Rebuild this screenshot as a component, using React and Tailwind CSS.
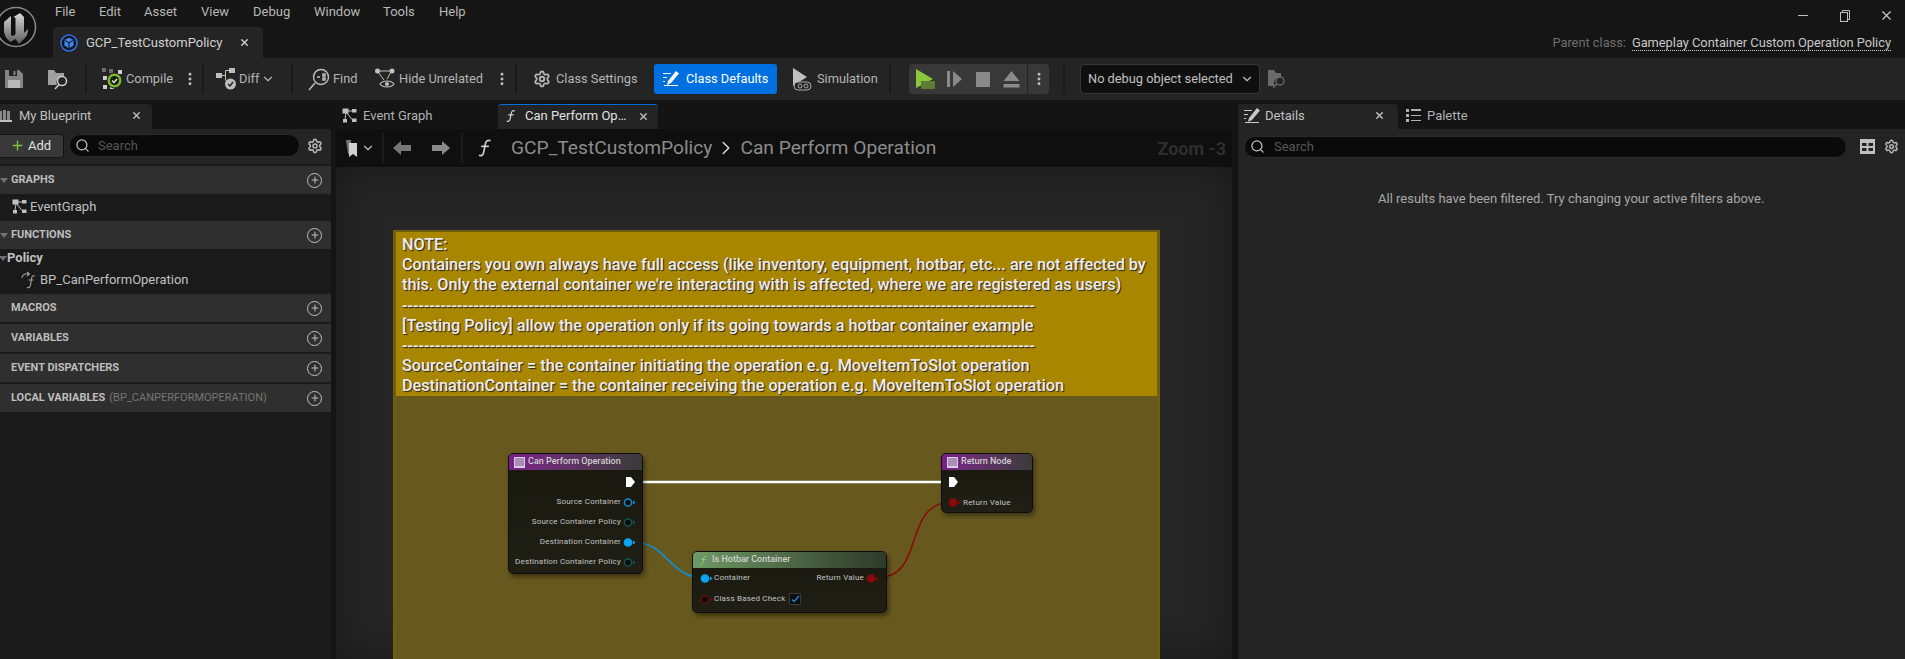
import { ChevronDown, ChevronRight, MoreVertical, Plus, Search, Settings, X } from 'lucide-react';

const menuItems = [
    ['File', 'w-[44px]'],
    ['Edit', 'w-[45px]'],
    ['Asset', 'w-[57px]'],
    ['View', 'w-[52px]'],
    ['Debug', 'w-[61px]'],
    ['Window', 'w-[69px]'],
    ['Tools', 'w-[56px]'],
    ['Help', 'w-[40px]'],
];

function UnrealLogo() {
    return (
        <svg width="44" height="44" viewBox="0 0 44 44" className="shrink-0">
            <defs>
                <linearGradient id="ue-mark" x1="0" y1="0" x2="0" y2="1">
                    <stop offset="0" stopColor="#d8d8d8" />
                    <stop offset="1" stopColor="#5c5c5c" />
                </linearGradient>
            </defs>
            <circle cx="22" cy="22" r="19.500" fill="#101010" stroke="#8a8a8a" strokeWidth="1.500" />
            <path d="M10 17l7-6v18c0 2 2 2.500 3.500 1l1-1V13l-2-1 6.500-4 4 4v16l4-4c0 4-1 7-4 10l-5 5-3.500-5-5 3c-4-3-6.500-7-6.500-12z" fill="url(#ue-mark)" />
        </svg>
    );
}

function BlueprintBadge() {
    return (
        <svg width="18" height="18" viewBox="0 0 18 18">
            <circle cx="9" cy="9" r="8" fill="#111" stroke="#2f6fe0" strokeWidth="1.6" />
            <path d="M9 3.5l4.6 2.6v5.4L9 14.5l-4.6-3V6.1z" fill="#3f84f0" />
            <path d="M4.6 6.2L9 8.8l4.4-2.6M9 8.8v5.5" stroke="#111" strokeWidth="1" fill="none" />
        </svg>
    );
}

function GraphIcon({ className = 'text-[#c0c0c0]' }) {
    return (
        <svg width="15" height="15" viewBox="0 0 15 15" className={className} fill="currentColor">
            <rect x="0.5" y="0.5" width="6" height="5" />
            <rect x="10" y="1" width="4.5" height="3.5" />
            <rect x="1" y="11" width="4" height="3.5" />
            <rect x="10" y="10.5" width="4.5" height="3.5" />
            <path d="M6 3h4M4 5l-1 6M5 5l5 6.5" stroke="currentColor" strokeWidth="1" fill="none" />
        </svg>
    );
}

function FunctionGlyph({ size = 18, color = '#c8c8c8' }) {
    return (
        <svg width={size} height={size} viewBox="0 0 18 18" fill="none" stroke={color} strokeWidth="1.5">
            <path d="M14 2.5c-2.5-1-4 0-4.6 2.5L7.8 13c-.5 2.5-2 3.5-4.3 2.6" />
            <path d="M5.5 7.5h7" />
        </svg>
    );
}

function DetailsIcon({ color = '#c8c8c8' }) {
    return (
        <svg width="18" height="18" viewBox="0 0 18 18" fill="none">
            <path d="M1 3.5h8M1 7.5h4M2 15.5h14M1 11.5h2" stroke={color} strokeWidth="1" />
            <path d="M14 1l3 2.5-8 9.5-4 2 1-4z" fill={color} />
        </svg>
    );
}

function GearIcon({ size = 18 }) {
    return <Settings size={size} strokeWidth={2.4} className="text-[#b5b5b5]" />;
}

function Sep() {
    return <div className="h-[30px] w-[2px] shrink-0 bg-[#1a1a1a]" />;
}

function Dots() {
    return <MoreVertical size={16} strokeWidth={2.4} className="shrink-0 text-[#c0c0c0]" />;
}

function Toolbar() {
    return (
        <div className="flex h-[42px] shrink-0 items-center bg-[#242424] text-[12.800px] text-[#b4b4b4]">
            <div className="flex w-[85px] shrink-0 items-center pl-[5px]">
                <svg width="18" height="18" viewBox="0 0 18 18" fill="#858585">
                    <path d="M0 0h14l4 4v14H0z" />
                    <rect x="4" y="0" width="8" height="6" fill="#242424" />
                    <rect x="8.500" y="1" width="2" height="4" fill="#858585" />
                    <rect x="3" y="10" width="12" height="8" fill="#b8b8b8" />
                </svg>
                <svg width="21" height="21" viewBox="0 0 21 21" className="ml-[25px]" fill="none">
                    <path d="M0 1h6l2 3h8v3a6.500 6.500 0 0 0-7 9H0z" fill="#a0a0a0" />
                    <circle cx="14" cy="12" r="4.500" stroke="#d0d0d0" strokeWidth="1.500" />
                    <path d="M11 15.500l-4 4.500" stroke="#d0d0d0" strokeWidth="1.500" />
                </svg>
            </div>
            <Sep />
            <div className="flex w-[115px] shrink-0 items-center pl-[15px]">
                <svg width="21" height="22" viewBox="0 0 21 22" className="shrink-0">
                    <path d="M0 0h4v4H0zM7 1h4v4H7z" fill="#6e6e6e" />
                    <path d="M16 2h4v4h-4zM1 8h4v4H1zM1 17h4v4H1zM8 18h4v3H8z" fill="#d0d0d0" />
                    <circle cx="12.500" cy="12.500" r="7.500" fill="#7cb82f" stroke="#1c1c1c" strokeWidth="1" />
                    <circle cx="12.500" cy="12.500" r="4.500" fill="#17210d" />
                    <path d="M10 12.500l2 2 3-3.500" stroke="#e8e8e8" strokeWidth="1.500" fill="none" />
                </svg>
                <span className="ml-[3px]">Compile</span>
                <span className="ml-[9px] flex"><Dots /></span>
            </div>
            <Sep />
            <div className="flex w-[87px] shrink-0 items-center pl-[12px]">
                <svg width="20" height="24" viewBox="0 0 20 24" className="shrink-0" fill="#bdbdbd">
                    <rect x="0" y="6" width="6" height="5" />
                    <rect x="13" y="1" width="6" height="5" />
                    <path d="M6 8.5h3.5V3.5H13M9.5 8.5v5" stroke="#bdbdbd" fill="none" />
                    <circle cx="14.5" cy="17" r="5.5" />
                    <path d="M12 17l2 2 3-4" stroke="#242424" strokeWidth="1.4" fill="none" />
                </svg>
                <span className="ml-[3px]">Diff</span>
                <ChevronDown size={14} className="ml-[2px]" />
            </div>
            <Sep />
            <div className="flex w-[222px] shrink-0 items-center pl-[15px]">
                <svg width="22" height="24" viewBox="0 0 22 24" className="shrink-0" fill="none" stroke="#c0c0c0" strokeWidth="1.4">
                    <circle cx="13" cy="10" r="7.5" />
                    <path d="M7 16l-6 7" />
                    <path d="M9 10h3M15 7h2v2h-2zM15 11h2v2h-2z" />
                </svg>
                <span className="ml-[3px] w-[28px]">Find</span>
                <svg width="20" height="22" viewBox="0 0 20 22" className="ml-[14px] shrink-0" fill="none">
                    <circle cx="2.5" cy="3" r="2.5" fill="#c0c0c0" />
                    <circle cx="17" cy="3" r="2.5" fill="#c0c0c0" />
                    <path d="M3 3h13M3 4l6 8M16 4l-4 7" stroke="#c0c0c0" />
                    <path d="M5 16c3-4 11-4 14 0-3 4-11 4-14 0z" stroke="#c0c0c0" strokeWidth="1.2" />
                    <circle cx="12" cy="16" r="2" fill="#c0c0c0" />
                </svg>
                <span className="ml-[4px] w-[95px] whitespace-nowrap">Hide Unrelated</span>
                <Dots />
            </div>
            <Sep />
            <div className="flex w-[372px] shrink-0 items-center pl-[16px]">
                <GearIcon size={18} />
                <span className="ml-[5px] w-[98px] whitespace-nowrap">Class Settings</span>
                <div className="flex h-[30px] w-[123px] shrink-0 items-center rounded-[3px] bg-[#0070e0] pl-[8px] text-white">
                    <DetailsIcon color="#ffffff" />
                    <span className="ml-[6px] whitespace-nowrap">Class Defaults</span>
                </div>
                <svg width="20" height="24" viewBox="0 0 20 24" className="ml-[15px] shrink-0">
                    <path d="M1 1l14 9-14 9z" fill="#c0c0c0" />
                    <rect x="2" y="15" width="17" height="8" rx="4" fill="#242424" stroke="#a8a8a8" />
                    <circle cx="8" cy="19" r="2" fill="none" stroke="#a8a8a8" />
                    <circle cx="14" cy="19" r="2" fill="none" stroke="#a8a8a8" />
                </svg>
                <span className="ml-[5px] whitespace-nowrap">Simulation</span>
            </div>
            <Sep />
            <div className="flex w-[172px] shrink-0 items-center pl-[18px]">
                <div className="flex h-[30px] w-[118px] shrink-0 items-center rounded-l-[4px] bg-[#383838]">
                    <svg width="20" height="20" viewBox="0 0 20 20" className="ml-[7px] shrink-0">
                        <path d="M0 0l17 10L0 19z" fill="#8cc63f" />
                        <rect x="5" y="12" width="14" height="8" fill="#5b7e33" />
                    </svg>
                    <svg width="16" height="16" viewBox="0 0 16 16" className="ml-[11px] shrink-0" fill="#8a8a8a">
                        <rect x="0" y="0" width="3" height="16" />
                        <path d="M6 0l9 8-9 8z" />
                    </svg>
                    <div className="ml-[13px] h-[15px] w-[14px] shrink-0 bg-[#8a8a8a]" />
                    <svg width="17" height="17" viewBox="0 0 17 17" className="ml-[13px] shrink-0" fill="#8a8a8a">
                        <path d="M8.5 0l8 10H.5z" />
                        <rect x="0.5" y="13" width="16" height="3.5" />
                    </svg>
                </div>
                <div className="ml-[1px] flex h-[30px] w-[21px] shrink-0 items-center justify-center rounded-r-[4px] bg-[#383838]">
                    <Dots />
                </div>
            </div>
            <Sep />
            <div className="flex grow items-center pl-[15px]">
                <div className="flex h-[30px] w-[180px] shrink-0 items-center justify-between rounded-[4px] border border-[#383838] bg-[#0f0f0f] pl-[7px] pr-[5px] text-[#c0c0c0]">
                    <span className="whitespace-nowrap">No debug object selected</span>
                    <ChevronDown size={14} />
                </div>
                <svg width="20" height="20" viewBox="0 0 20 20" className="ml-[7px] shrink-0" fill="none">
                    <path d="M1 1h6l2 3h5v4a6 6 0 0 0-6 9H1z" fill="#6a6a6a" />
                    <circle cx="13" cy="12" r="4" stroke="#6a6a6a" strokeWidth="1.3" />
                    <path d="M10 15l-4 4" stroke="#6a6a6a" strokeWidth="1.3" />
                </svg>
            </div>
        </div>
    );
}

function SectionRow({ label, suffix, open }) {
    return (
        <div className="flex h-[28px] shrink-0 items-center bg-[#2f2f2f] pr-[9px]">
            <div className="w-[11px] shrink-0">
                {open ? <div className="h-0 w-0 border-x-[4px] border-t-[5px] border-x-transparent border-t-[#707070]" /> : null}
            </div>
            <span className="text-[11px] font-bold uppercase whitespace-nowrap text-[#bdbdbd]">
                {label}
                {suffix ? <span className="ml-[4px] font-normal text-[#757575]">{suffix}</span> : null}
            </span>
            <div className="ml-auto flex h-[15px] w-[15px] items-center justify-center rounded-full border-[1.5px] border-[#c0c0c0] text-[#c0c0c0]">
                <Plus size={10} strokeWidth={2.5} />
            </div>
        </div>
    );
}

function MyBlueprint() {
    return (
        <div className="flex w-[331px] shrink-0 flex-col">
            <div className="flex h-[29px] shrink-0 items-end bg-[#141414]">
                <div className="flex h-[25px] w-[152px] items-center rounded-tr-[4px] bg-[#242424] pb-[2px] text-[13px] text-[#c0c0c0]">
                    <svg width="14" height="14" viewBox="0 0 14 14" className="-ml-[2px] shrink-0" fill="#8a8a8a">
                        <path d="M1 2h3v9H1zM5 1h3v10H5zM9 2h3v9H9z" />
                        <rect x="0" y="11" width="14" height="2" fill="#c0c0c0" />
                    </svg>
                    <span className="ml-[7px] w-[112px]">My Blueprint</span>
                    <X size={11} strokeWidth={3} />
                </div>
            </div>
            <div className="flex h-[35px] shrink-0 items-center bg-[#242424] pb-[2px]">
                <div className="flex h-[24px] w-[64px] shrink-0 items-center rounded-r-[3px] border border-l-0 border-[#141414] bg-[#383838] text-[13px] text-[#e0e0e0]">
                    <Plus size={15} strokeWidth={2.2} className="ml-[10px] text-[#7cc23f]" />
                    <span className="ml-[3px]">Add</span>
                </div>
                <div className="ml-[5px] flex h-[23px] w-[231px] shrink-0 items-center rounded-full border border-[#2a2a2a] bg-[#0a0a0a] text-[13px] text-[#555]">
                    <Search size={15} className="ml-[5px] text-[#c0c0c0]" />
                    <span className="ml-[8px]">Search</span>
                </div>
                <span className="ml-[7px] flex"><GearIcon size={16} /></span>
            </div>
            <div className="h-[2px] shrink-0 bg-[#1a1a1a]" />
            <SectionRow label="Graphs" open />
            <div className="flex h-[27px] shrink-0 items-center bg-[#1a1a1a] pb-[2px] pl-[12px] text-[13px] text-[#c0c0c0]">
                <GraphIcon />
                <span className="ml-[3px]">EventGraph</span>
            </div>
            <SectionRow label="Functions" open />
            <div className="h-[45px] shrink-0 bg-[#1a1a1a]">
                <div className="-ml-[1px] flex h-[18px] items-center">
                    <div className="h-0 w-0 border-x-[4px] border-t-[5px] border-x-transparent border-t-[#707070]" />
                    <span className="text-[13px] font-bold text-[#c0c0c0]">Policy</span>
                </div>
                <div className="flex h-[25px] items-center pl-[21px] text-[13px] text-[#c0c0c0]">
                    <svg width="16" height="18" viewBox="0 0 16 18" fill="none" stroke="#a0a0a0" strokeWidth="1.1">
                        <path d="M1 7c0-3 3-5 7-4M6 1l2.5 2L6 5" />
                        <path d="M14 5c-2-.6-3 0-3.3 2L9.500 14c-.3 2-1.500 3-3.500 2.500M7.500 9h5" />
                    </svg>
                    <span className="ml-[3px]">BP_CanPerformOperation</span>
                </div>
            </div>
            <SectionRow label="Macros" />
            <div className="h-[2px] shrink-0 bg-[#1a1a1a]" />
            <SectionRow label="Variables" />
            <div className="h-[2px] shrink-0 bg-[#1a1a1a]" />
            <SectionRow label="Event Dispatchers" />
            <div className="h-[2px] shrink-0 bg-[#1a1a1a]" />
            <SectionRow label="Local Variables" suffix="(BP_CANPERFORMOPERATION)" />
            <div className="grow bg-[#1a1a1a]" />
        </div>
    );
}

function Pin({ color, filled }) {
    return (
        <svg width="15" height="11" viewBox="0 0 15 11" className="shrink-0">
            <circle cx="6" cy="5.500" r="3.600" fill={filled ? color : '#0b0b08'} stroke={color} strokeWidth="1.500" />
            <path d="M11 3.500l2.500 2-2.500 2z" fill={color} />
        </svg>
    );
}

function ExecPin() {
    return (
        <svg width="11" height="12" viewBox="0 0 11 12" className="shrink-0">
            <path d="M1 1h5l4 5-4 5H1z" fill="#ffffff" />
        </svg>
    );
}

function NodeHeader({ title, gradient, func }) {
    return (
        <div className={`flex h-[16px] items-center rounded-t-[4px] pl-[5px] ${gradient}`}>
            {func ? (
                <FunctionGlyph size={11} color="#8fd080" />
            ) : (
                <div className="flex h-[11px] w-[11px] shrink-0 items-end border border-[#d8cde0] bg-[#a98fb5]">
                    <div className="h-[1px] w-full bg-[#d8cde0]" />
                </div>
            )}
            <span className="ml-[3px] text-[9px] font-medium whitespace-nowrap text-[#d0d0d0]">{title}</span>
        </div>
    );
}

function OutRow({ label, color, filled }) {
    return (
        <div className="flex h-[20px] items-center justify-end pr-[5px]">
            <span className="mr-[1px] text-[8px] tracking-[0.2px] whitespace-nowrap text-[#c4c4c4]">{label}</span>
            <Pin color={color} filled={filled} />
        </div>
    );
}

function Node({ className, children }) {
    return (
        <div className={`absolute rounded-[5px] border border-[#0d0d0d] bg-gradient-to-b from-[#18180f] to-[#1f1f15] shadow-[2px_3px_4px_rgba(0,0,0,0.4)] ${className}`}>
            {children}
        </div>
    );
}

function CanvasNodes() {
    return (
        <div className="relative h-[300px] bg-[#67581e]">
            <svg width="760" height="300" className="absolute inset-0" fill="none">
                <path d="M240 86H552" stroke="#ffffff" strokeWidth="2.500" />
                <path d="M237 146C272 146 272 182 309 182" stroke="#0a93d8" strokeWidth="1.500" />
                <path d="M480 182C532 182 504 106 557 106" stroke="#8a0a0a" strokeWidth="1.500" />
            </svg>
            <Node className="left-[112px] top-[57px] h-[121px] w-[135px]">
                <NodeHeader title="Can Perform Operation" gradient="bg-gradient-to-r from-[#7d1d8a] to-[#3a3a3a]" />
                <div className="flex h-[24px] items-center justify-end pr-[6px]"><ExecPin /></div>
                <div className="-mt-[2px]">
                    <OutRow label="Source Container" color="#0a8fd8" />
                    <OutRow label="Source Container Policy" color="#0b5a55" />
                    <OutRow label="Destination Container" color="#0aa5f5" filled />
                    <OutRow label="Destination Container Policy" color="#0b5a55" />
                </div>
            </Node>
            <Node className="left-[296px] top-[155px] h-[62px] w-[195px]">
                <NodeHeader title="Is Hotbar Container" func gradient="bg-gradient-to-r from-[#6f9a66] to-[#2e3a2a]" />
                <div className="flex h-[20px] items-center pl-[6px] pr-[6px]">
                    <Pin color="#0aa5f5" filled />
                    <span className="text-[8px] tracking-[0.2px] text-[#c4c4c4]">Container</span>
                    <span className="ml-auto mr-[1px] text-[8px] tracking-[0.2px] text-[#c4c4c4]">Return Value</span>
                    <Pin color="#8a0a0a" filled />
                </div>
                <div className="flex h-[22px] items-center pl-[6px]">
                    <Pin color="#6a0a0a" />
                    <span className="text-[8px] tracking-[0.2px] whitespace-nowrap text-[#c4c4c4]">Class Based Check</span>
                    <div className="ml-[4px] flex h-[12px] w-[12px] items-center justify-center rounded-[1px] border border-[#3a3a3a] bg-[#0d0d0d]">
                        <svg width="9" height="8" viewBox="0 0 9 8" fill="none">
                            <path d="M1 4.500l2.200 2L8 1" stroke="#1a80e0" strokeWidth="1.500" />
                        </svg>
                    </div>
                </div>
            </Node>
            <Node className="left-[545px] top-[57px] h-[60px] w-[92px]">
                <NodeHeader title="Return Node" gradient="bg-gradient-to-r from-[#7d1d8a] to-[#3a3a3a]" />
                <div className="flex h-[24px] items-center pl-[6px]"><ExecPin /></div>
                <div className="flex h-[17px] items-center pl-[5px]">
                    <Pin color="#8a0a0a" filled />
                    <span className="ml-[1px] text-[8px] tracking-[0.2px] whitespace-nowrap text-[#c4c4c4]">Return Value</span>
                </div>
            </Node>
        </div>
    );
}

const noteLines = [
    'NOTE:',
    'Containers you own always have full access (like inventory, equipment, hotbar, etc... are not affected by',
    "this. Only the external container we're interacting with is affected, where we are registered as users)",
    '-'.repeat(115),
    '[Testing Policy] allow the operation only if its going towards a hotbar container example',
    '-'.repeat(115),
    'SourceContainer = the container initiating the operation e.g. MoveItemToSlot operation',
    'DestinationContainer = the container receiving the operation e.g. MoveItemToSlot operation',
];

function GraphPanel() {
    return (
        <div className="flex w-[896px] shrink-0 flex-col">
            <div className="flex h-[29px] shrink-0 items-end bg-[#141414] text-[13px]">
                <div className="flex h-[25px] w-[162px] items-center pb-[2px] pl-[6px] text-[#b0b0b0]">
                    <GraphIcon />
                    <span className="ml-[6px]">Event Graph</span>
                </div>
                <div className="flex h-[25px] w-[160px] items-center rounded-t-[4px] border-t border-t-[#0070e0] bg-[#242424] pb-[2px] pl-[6px] text-[#e0e0e0]">
                    <FunctionGlyph size={14} color="#d8d8d8" />
                    <span className="ml-[7px] w-[113px] whitespace-nowrap">Can Perform Op…</span>
                    <X size={11} strokeWidth={3} className="text-[#c0c0c0]" />
                </div>
            </div>
            <div className="flex h-[38px] shrink-0 items-center bg-[#0f0f0f] text-[19.200px] text-[#8c8c8c]">
                <svg width="12" height="17" viewBox="0 0 12 17" className="ml-[10px] shrink-0">
                    <path d="M0 0h5v14l-3 0z" fill="#777" />
                    <path d="M3 3h8v14l-4-3-4 3z" fill="#d0d0d0" />
                </svg>
                <ChevronDown size={14} className="ml-[3px] text-[#c0c0c0]" />
                <div className="ml-[7px] h-[30px] w-[2px] bg-[#1c1c1c]" />
                <svg width="18" height="14" viewBox="0 0 18 14" className="ml-[9px] shrink-0" fill="#777">
                    <path d="M0 7l8-7v4h10v6H8v4z" />
                </svg>
                <svg width="18" height="14" viewBox="0 0 18 14" className="ml-[21px] shrink-0" fill="#8a8a8a">
                    <path d="M18 7l-8-7v4H0v6h10v4z" />
                </svg>
                <div className="ml-[11px] h-[30px] w-[2px] bg-[#1c1c1c]" />
                <span className="ml-[12px] flex"><FunctionGlyph size={20} color="#d0d0d0" /></span>
                <span className="ml-[16px] whitespace-nowrap">GCP_TestCustomPolicy</span>
                <ChevronRight size={22} strokeWidth={1.500} className="ml-[3px] text-[#e0e0e0]" />
                <span className="ml-[3px] whitespace-nowrap">Can Perform Operation</span>
                <span className="ml-auto pr-[6px] text-[18px] font-bold text-[#2e2e2e]">Zoom -3</span>
            </div>
            <div className="min-h-0 grow overflow-hidden bg-[#262626] pl-[57px] pt-[63px] shadow-[inset_0_0_40px_#181818]">
                <div className="w-[767px] border-x-[3px] border-t-[2px] border-[#6f5d10]">
                    <div className="h-[164px] bg-[#a98600] pl-[6px] pt-[3px] font-['Roboto'] text-[16.200px] font-medium leading-[20px] text-[#ececec] [text-shadow:1px_1px_1px_#222]">
                        {noteLines.map((line, i) => (
                            <div key={i} className="h-[20.200px] whitespace-nowrap">{line}</div>
                        ))}
                    </div>
                    <CanvasNodes />
                </div>
            </div>
        </div>
    );
}

function DetailsPanel() {
    return (
        <div className="flex min-w-0 grow flex-col">
            <div className="flex h-[29px] shrink-0 items-end bg-[#141414] text-[13px]">
                <div className="flex h-[25px] w-[160px] items-center rounded-tr-[4px] bg-[#242424] pb-[2px] pl-[5px] text-[#c0c0c0]">
                    <DetailsIcon />
                    <span className="ml-[4px] w-[109px]">Details</span>
                    <X size={11} strokeWidth={3} />
                </div>
                <div className="flex h-[25px] items-center pb-[2px] pl-[8px] text-[#b0b0b0]">
                    <svg width="15" height="15" viewBox="0 0 15 15" fill="#b0b0b0">
                        <rect x="0" y="1" width="3" height="3" />
                        <rect x="0" y="6" width="3" height="3" />
                        <rect x="0" y="11" width="3" height="3" />
                        <rect x="5" y="1" width="10" height="2" />
                        <rect x="5" y="7" width="10" height="1" />
                        <rect x="5" y="12" width="10" height="1" />
                    </svg>
                    <span className="ml-[6px]">Palette</span>
                </div>
            </div>
            <div className="grow bg-[#242424]">
                <div className="flex h-[37px] items-center pb-[2px] pl-[6px]">
                    <div className="flex h-[22px] w-[603px] shrink-0 items-center rounded-full border border-[#2a2a2a] bg-[#0a0a0a] text-[13px] text-[#555]">
                        <Search size={15} className="ml-[5px] text-[#c0c0c0]" />
                        <span className="ml-[9px]">Search</span>
                    </div>
                    <svg width="15" height="15" viewBox="0 0 15 15" className="ml-[13px] shrink-0" fill="#c0c0c0">
                        <path d="M0 0h15v15H0zM2 4v3h4.500V4zM8.500 4v3H13V4zM2 9v3h4.500V9zM8.500 9v3H13V9z" fillRule="evenodd" />
                    </svg>
                    <span className="ml-[9px] flex"><GearIcon size={15} /></span>
                </div>
                <p className="mt-[23px] pl-[140px] text-[13px] text-[#a8a8a8]">All results have been filtered. Try changing your active filters above.</p>
            </div>
        </div>
    );
}

export default function App() {
    return (
        <div className="flex h-screen w-full flex-col overflow-hidden bg-[#141414] font-['Roboto',sans-serif]">
            <div className="relative flex h-[58px] shrink-0 bg-[#151515]">
                <div className="-ml-[6px] mt-[5px] w-[59px] shrink-0">
                    <UnrealLogo />
                </div>
                <div className="flex w-[210px] shrink-0 flex-col">
                    <div className="flex h-[27px] items-center pb-[3px] pl-[2px] text-[13px] text-[#b8b8b8]">
                        {menuItems.map(([label, width]) => (
                            <span key={label} className={`shrink-0 ${width}`}>{label}</span>
                        ))}
                    </div>
                    <div className="flex h-[31px] items-center rounded-t-[4px] bg-[#242424] pl-[7px] text-[13px] text-[#d0d0d0]">
                        <BlueprintBadge />
                        <span className="ml-[8px] w-[153px]">GCP_TestCustomPolicy</span>
                        <X size={11} strokeWidth={3} />
                    </div>
                </div>
                <div className="ml-auto flex w-[360px] shrink-0 flex-col items-end pr-[14px]">
                    <div className="flex h-[33px] items-center pb-[2px] text-[#b8b8b8]">
                        <div className="h-[1px] w-[10px] bg-[#c0c0c0]" />
                        <svg width="10" height="12" viewBox="0 0 10 12" className="ml-[32px]" fill="none" stroke="#c0c0c0">
                            <rect x="0.500" y="2.500" width="7" height="9" />
                            <path d="M2.500 2.500V.500h7v9H7.500" />
                        </svg>
                        <X size={15} strokeWidth={1.800} className="ml-[29px] -mr-[3px] text-[#d0d0d0]" />
                    </div>
                    <div className="flex items-center text-[12.800px]">
                        <span className="text-[#6e6e6e]">Parent class:</span>
                        <span className="ml-[6px] border-b border-dotted border-[#d0d0d0] leading-[15px] text-[#c8c8c8]">Gameplay Container Custom Operation Policy</span>
                    </div>
                </div>
            </div>
            <Toolbar />
            <div className="flex min-h-0 grow">
                <MyBlueprint />
                <div className="w-[5px] shrink-0 bg-[#141414]" />
                <GraphPanel />
                <div className="w-[6px] shrink-0 bg-[#141414]" />
                <DetailsPanel />
            </div>
        </div>
    );
}
